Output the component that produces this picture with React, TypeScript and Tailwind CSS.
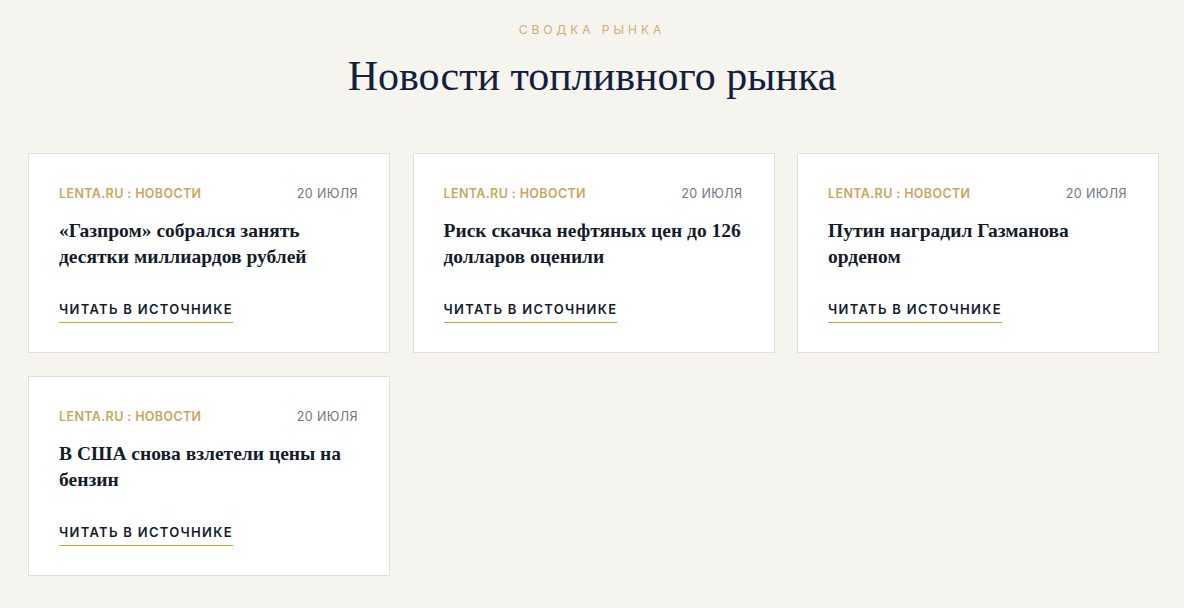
import React from 'react';

type NewsItem = {
  source: string;
  date: string;
  title: string;
};

const news: NewsItem[] = [
  { source: 'LENTA.RU : НОВОСТИ', date: '20 ИЮЛЯ', title: '«Газпром» собрался занять десятки миллиардов рублей' },
  { source: 'LENTA.RU : НОВОСТИ', date: '20 ИЮЛЯ', title: 'Риск скачка нефтяных цен до 126 долларов оценили' },
  { source: 'LENTA.RU : НОВОСТИ', date: '20 ИЮЛЯ', title: 'Путин наградил Газманова орденом' },
  { source: 'LENTA.RU : НОВОСТИ', date: '20 ИЮЛЯ', title: 'В США снова взлетели цены на бензин' },
];

function NewsCard({ item }: { item: NewsItem }) {
  return (
    <article className="flex h-[200px] flex-col border border-[#e3dfd4] bg-white pl-[30px] pr-[31px] pt-[31px]">
      <div className="flex items-center justify-between text-[12.5px] leading-[18px] tracking-[0.03em]">
        <span className="font-semibold text-[#c9a561]">{item.source}</span>
        <span className="text-[#6f7683]">{item.date}</span>
      </div>
      <h3 className="mt-[15px] h-[52px] font-['Liberation_Serif',serif] text-[19.5px] font-bold leading-[26px] text-[#141c2b]">
        {item.title}
      </h3>
      <div className="mt-[30px] flex">
        <a href="#" className="flex flex-col gap-[4px] text-[13px] font-semibold leading-[18px] tracking-[0.1em] text-[#141c2b]">
          <span>ЧИТАТЬ В ИСТОЧНИКЕ</span>
          <span className="h-px w-full bg-[#c99f3c]"></span>
        </a>
      </div>
    </article>
  );
}

export default function App() {
  return (
    <div className="min-h-[608px] bg-[#f5f4ef] font-['Inter',sans-serif]">
      {/* Header */}
      <div className="flex flex-col items-center pt-[22px]">
        <p className="text-[12px] leading-[16px] tracking-[0.33em] text-[#d0ac6e]">СВОДКА РЫНКА</p>
        <h2 className="mt-[14px] font-['Liberation_Serif',serif] text-[42px] leading-[48px] text-[#13203a]">
          Новости топливного рынка
        </h2>
      </div>

      {/* Cards */}
      <div className="ml-[28px] mt-[53px] grid w-[1131px] grid-cols-3 gap-x-[22.5px] gap-y-[23px]">
        {news.map((item, index) => (
          <NewsCard key={index} item={item} />
        ))}
      </div>
    </div>
  );
}
